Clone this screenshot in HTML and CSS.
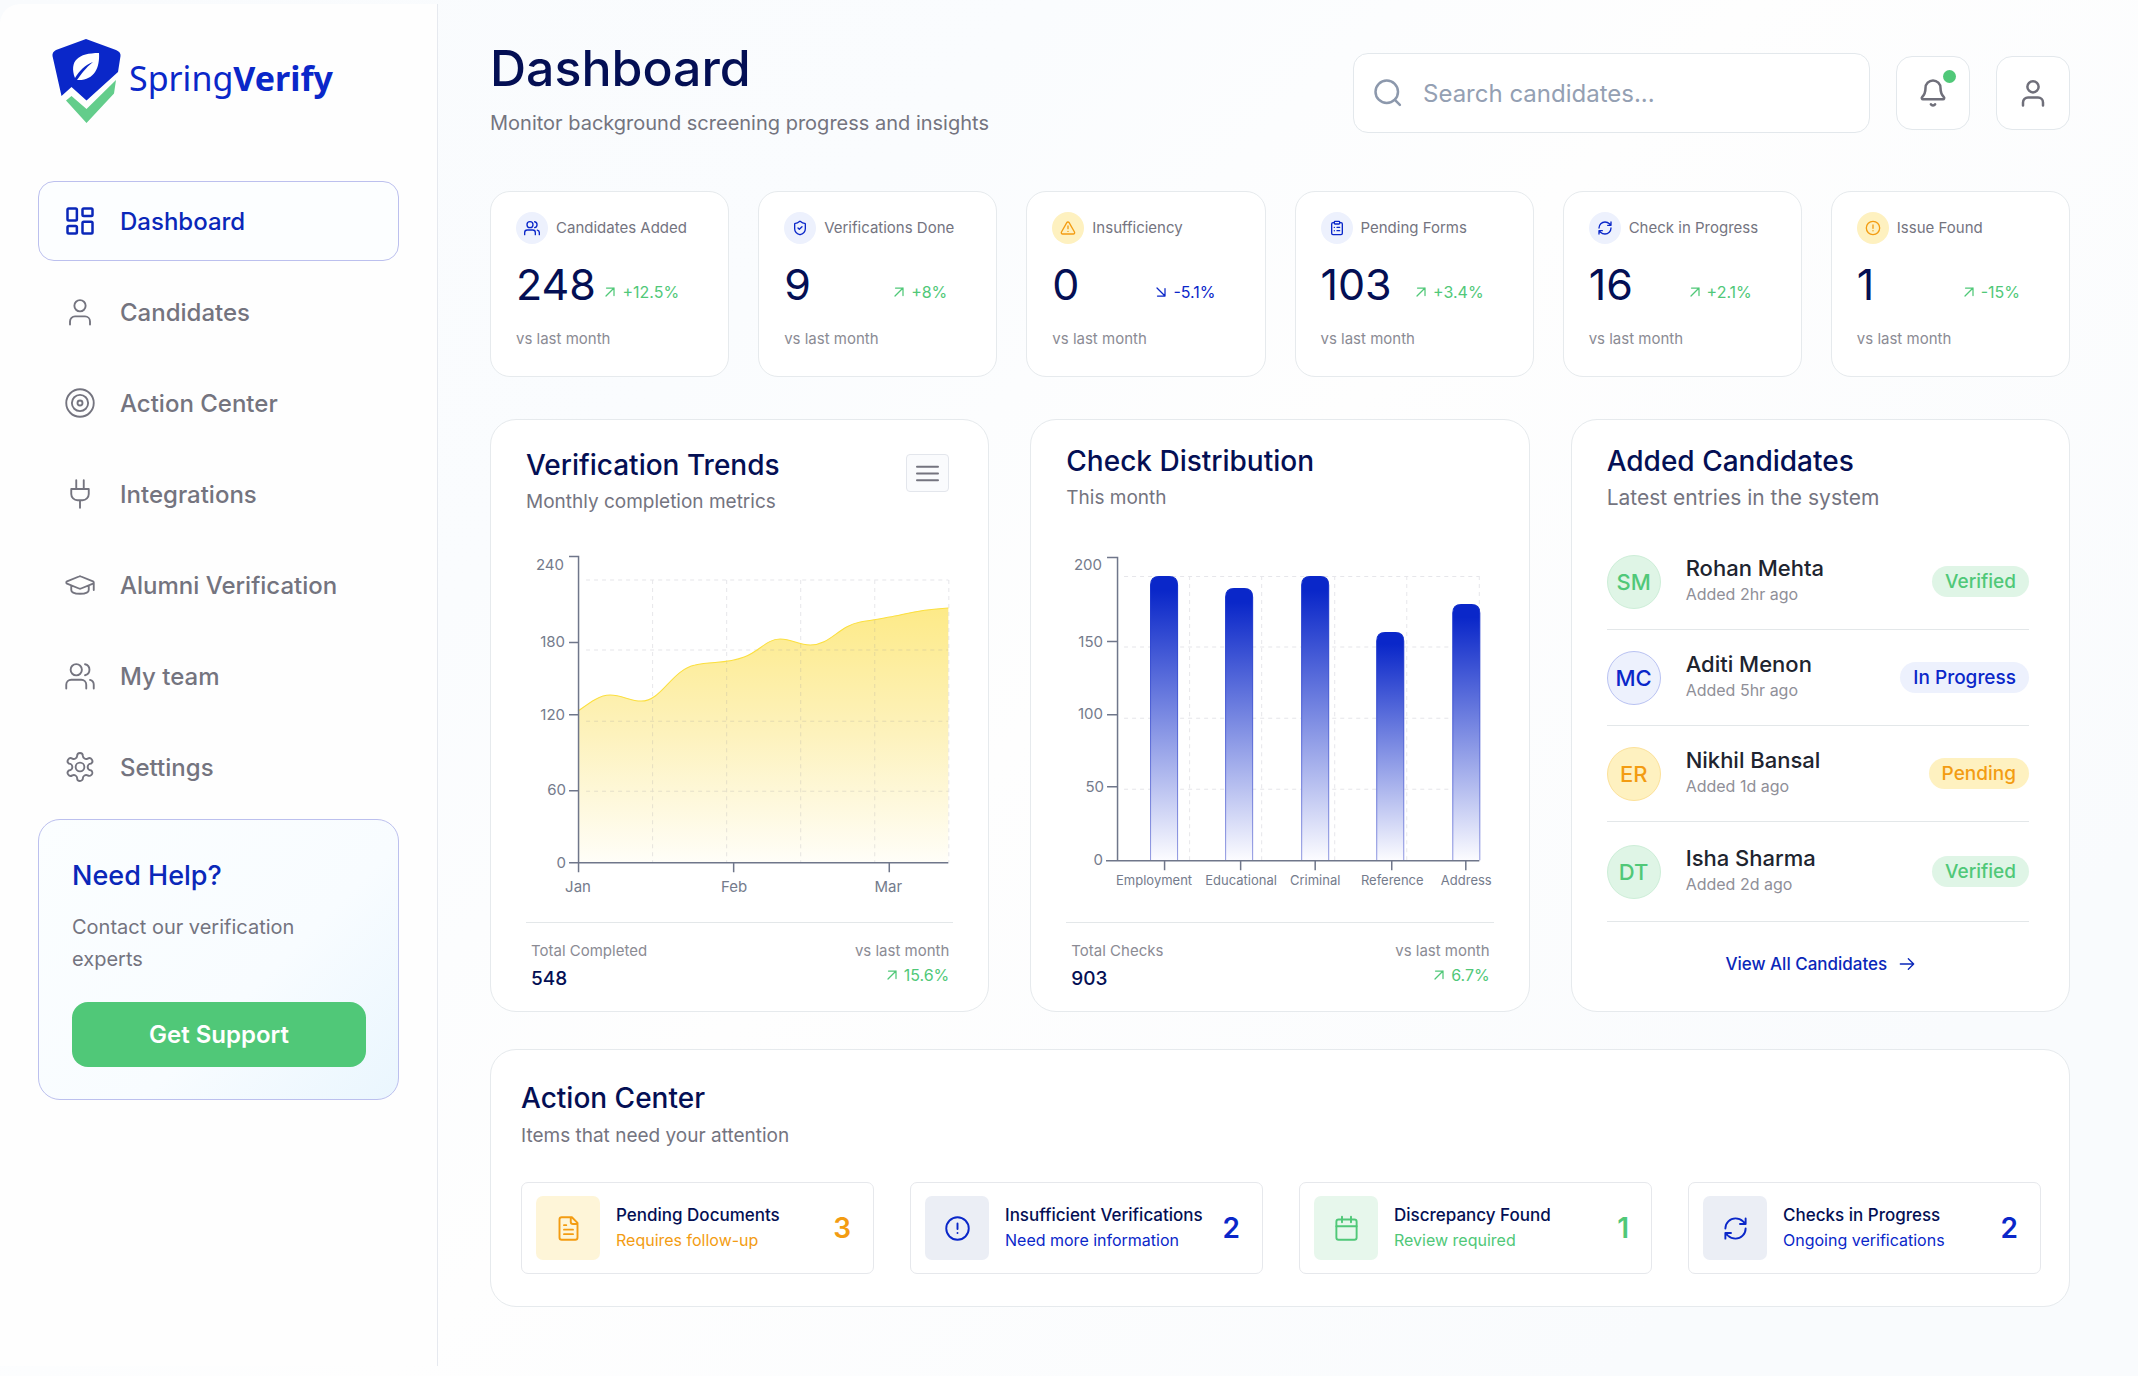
FILE: index.html
```html
<!DOCTYPE html>
<html lang="en">
<head>
    <meta charset="UTF-8">
    <meta name="viewport" content="width=device-width, initial-scale=1.0">
    <title>SpringVerify Dashboard</title>
    <link rel="stylesheet" href="styles.css">
</head>
<body>
    <!-- Shared icons -->
    <svg class="sprite" aria-hidden="true">
        <symbol id="i-grid" viewBox="0 0 24 24"><rect x="2" y="2" width="7.5" height="9.5" rx="1"/><rect x="14" y="2" width="8" height="6" rx="1"/><rect x="14" y="12.5" width="8" height="9.5" rx="1"/><rect x="2" y="16" width="7.5" height="6" rx="1"/></symbol>
        <symbol id="i-user" viewBox="0 0 24 24"><circle cx="12" cy="7" r="4.5"/><path d="M4 22v-2.5a4 4 0 0 1 4-4h8a4 4 0 0 1 4 4V22"/></symbol>
        <symbol id="i-target" viewBox="0 0 24 24"><circle cx="12" cy="12" r="11"/><circle cx="12" cy="12" r="6.5"/><circle cx="12" cy="12" r="2"/></symbol>
        <symbol id="i-plug" viewBox="0 0 24 24"><path d="M12 23v-6M9 8V1M15 8V1M19 8v4a5 5 0 0 1-5 5h-4a5 5 0 0 1-5-5V8Z"/></symbol>
        <symbol id="i-cap" viewBox="0 0 24 24"><path d="M22.4 10.9a1 1 0 0 0 0-1.8l-9.6-3.9a2 2 0 0 0-1.6 0l-9.6 3.9a1 1 0 0 0 0 1.8l9.6 3.9a2 2 0 0 0 1.6 0zM23 10v6M5 12.5V16c0 4 14 4 14 0v-3.5"/></symbol>
        <symbol id="i-users" viewBox="0 0 24 24"><circle cx="9" cy="7" r="4.5"/><path d="M1 22v-3a4 4 0 0 1 4-4h8a4 4 0 0 1 4 4v3M23 22v-3a4 4 0 0 0-3-3.9M16 2.6a4.5 4.5 0 0 1 0 8.8"/></symbol>
        <symbol id="i-gear" viewBox="0 0 24 24"><path d="M9.7 3.1a2.3 2.3 0 0 1 4.6 0 2.6 2.6 0 0 0 3.8 2.2 2.3 2.3 0 0 1 2.7 4 2.7 2.7 0 0 0 0 5.4 2.3 2.3 0 0 1-2.7 4 2.6 2.6 0 0 0-3.8 2.2 2.3 2.3 0 0 1-4.6 0 2.6 2.6 0 0 0-3.8-2.2 2.3 2.3 0 0 1-2.7-4 2.7 2.7 0 0 0 0-5.4 2.3 2.3 0 0 1 2.7-4 2.6 2.6 0 0 0 3.8-2.2"/><circle cx="12" cy="12" r="3.5"/></symbol>
        <symbol id="i-search" viewBox="0 0 24 24"><circle cx="11" cy="11" r="9"/><path d="m17.5 17.5 4 4"/></symbol>
        <symbol id="i-bell" viewBox="0 0 24 24"><path d="M10.3 21a2 2 0 0 0 3.4 0M3.3 15.3A1 1 0 0 0 4 17h16a1 1 0 0 0 .7-1.7C19.4 14 18 12.5 18 8A6 6 0 0 0 6 8c0 4.5-1.4 6-2.7 7.3"/></symbol>
        <symbol id="i-shield" viewBox="0 0 24 24"><path d="M20 13c0 5-3.5 7.5-7.7 9a1 1 0 0 1-.6 0C7.5 20.5 4 18 4 13V6a1 1 0 0 1 1-1c2 0 4.5-1.2 6.2-2.7a1.2 1.2 0 0 1 1.6 0C14.5 3.8 17 5 19 5a1 1 0 0 1 1 1zM9 12l2 2 4-4"/></symbol>
        <symbol id="i-warn" viewBox="0 0 24 24"><path d="m21.7 18-8-14a2 2 0 0 0-3.5 0l-8 14A2 2 0 0 0 4 21h16a2 2 0 0 0 1.7-3M12 9v4M12 17v.1"/></symbol>
        <symbol id="i-clipboard" viewBox="0 0 24 24"><rect x="8" y="2" width="8" height="4" rx="1"/><path d="M16 4h2a2 2 0 0 1 2 2v14a2 2 0 0 1-2 2H6a2 2 0 0 1-2-2V6a2 2 0 0 1 2-2h2M12 11h4M12 16h4M8 11v.1M8 16v.1"/></symbol>
        <symbol id="i-sync" viewBox="0 0 24 24"><path d="M3 12a9 9 0 0 1 9-9 9.8 9.8 0 0 1 6.7 2.7L21 8M21 3v5h-5M21 12a9 9 0 0 1-9 9 9.8 9.8 0 0 1-6.7-2.7L3 16M8 16H3v5"/></symbol>
        <symbol id="i-alert" viewBox="0 0 24 24"><circle cx="12" cy="12" r="10"/><path d="M12 7.5v5M12 16v.1"/></symbol>
        <symbol id="i-up" viewBox="0 0 24 24"><path d="M4 20 20 4M5 4h15v15"/></symbol>
        <symbol id="i-down" viewBox="0 0 24 24"><path d="m4 4 16 16M20 5v15H5"/></symbol>
        <symbol id="i-right" viewBox="0 0 24 24"><path d="M2 12h20M14 4l8 8-8 8"/></symbol>
        <symbol id="i-menu" viewBox="0 0 24 24"><path d="M1 5h22M1 12h22M1 19h22"/></symbol>
        <symbol id="i-file" viewBox="0 0 24 24"><path d="M15 2H6a2 2 0 0 0-2 2v16a2 2 0 0 0 2 2h12a2 2 0 0 0 2-2V7ZM14 2v4a2 2 0 0 0 2 2h4M10 9H8M16 13H8M16 17H8"/></symbol>
        <symbol id="i-calendar" viewBox="0 0 24 24"><rect x="3" y="4" width="18" height="18" rx="2"/><path d="M8 1.5v5M16 1.5v5M3 10h18"/></symbol>
    </svg>

    <div class="layout">
        <aside class="sidebar">
            <a class="logo" href="#">
                <svg class="logo-mark" viewBox="0 0 70 86" aria-hidden="true">
                    <path fill="#0a27c9" d="M35 1 L65 12 Q70 14 69.500 18 L67 34 L35.500 62.500 L20.500 49 L10.500 58 L1.500 18 Q1 14 5 12 Z"/>
                    <path fill="#fff" d="M48 15 C49 30 43 43 26 42 C34 31 37 28 42 24 C34 27 28 33 24 40 C18 23 27 15 48 15 Z"/>
                    <path fill="#63cd8b" d="M15 62.500 L20.500 58 L35.500 71 L65 42 L63 55.500 L35.500 85 Z"/>
                </svg>
                <span class="logo-text">Spring<b>Verify</b></span>
            </a>

            <nav class="nav">
                <a class="nav-item active" href="#"><svg class="icon"><use href="#i-grid"/></svg>Dashboard</a>
                <a class="nav-item" href="#"><svg class="icon"><use href="#i-user"/></svg>Candidates</a>
                <a class="nav-item" href="#"><svg class="icon"><use href="#i-target"/></svg>Action Center</a>
                <a class="nav-item" href="#"><svg class="icon"><use href="#i-plug"/></svg>Integrations</a>
                <a class="nav-item" href="#"><svg class="icon"><use href="#i-cap"/></svg>Alumni Verification</a>
                <a class="nav-item" href="#"><svg class="icon"><use href="#i-users"/></svg>My team</a>
                <a class="nav-item" href="#"><svg class="icon"><use href="#i-gear"/></svg>Settings</a>
            </nav>

            <div class="help">
                <h2>Need Help?</h2>
                <p>Contact our verification experts</p>
                <button type="button">Get Support</button>
            </div>
        </aside>

        <main class="main">
            <header class="topbar">
                <div class="heading">
                    <h1>Dashboard</h1>
                    <p>Monitor background screening progress and insights</p>
                </div>
                <div class="tools">
                    <label class="search">
                        <svg class="icon"><use href="#i-search"/></svg>
                        <input type="search" placeholder="Search candidates..." aria-label="Search candidates">
                    </label>
                    <button class="tool-btn" type="button" aria-label="Notifications">
                        <svg class="icon"><use href="#i-bell"/></svg>
                        <span class="dot"></span>
                    </button>
                    <button class="tool-btn" type="button" aria-label="Profile">
                        <svg class="icon"><use href="#i-user"/></svg>
                    </button>
                </div>
            </header>

            <section class="stats">
                <div class="card stat">
                    <div class="stat-head"><span class="bubble blue"><svg class="icon"><use href="#i-users"/></svg></span>Candidates Added</div>
                    <div class="stat-row"><span class="value">248</span><span class="trend"><svg class="icon"><use href="#i-up"/></svg>+12.5%</span></div>
                    <div class="note">vs last month</div>
                </div>
                <div class="card stat">
                    <div class="stat-head"><span class="bubble blue"><svg class="icon"><use href="#i-shield"/></svg></span>Verifications Done</div>
                    <div class="stat-row"><span class="value">9</span><span class="trend"><svg class="icon"><use href="#i-up"/></svg>+8%</span></div>
                    <div class="note">vs last month</div>
                </div>
                <div class="card stat">
                    <div class="stat-head"><span class="bubble amber"><svg class="icon"><use href="#i-warn"/></svg></span>Insufficiency</div>
                    <div class="stat-row"><span class="value">0</span><span class="trend down"><svg class="icon"><use href="#i-down"/></svg>-5.1%</span></div>
                    <div class="note">vs last month</div>
                </div>
                <div class="card stat">
                    <div class="stat-head"><span class="bubble blue"><svg class="icon"><use href="#i-clipboard"/></svg></span>Pending Forms</div>
                    <div class="stat-row"><span class="value">103</span><span class="trend"><svg class="icon"><use href="#i-up"/></svg>+3.4%</span></div>
                    <div class="note">vs last month</div>
                </div>
                <div class="card stat">
                    <div class="stat-head"><span class="bubble blue"><svg class="icon"><use href="#i-sync"/></svg></span>Check in Progress</div>
                    <div class="stat-row"><span class="value">16</span><span class="trend"><svg class="icon"><use href="#i-up"/></svg>+2.1%</span></div>
                    <div class="note">vs last month</div>
                </div>
                <div class="card stat">
                    <div class="stat-head"><span class="bubble amber"><svg class="icon"><use href="#i-alert"/></svg></span>Issue Found</div>
                    <div class="stat-row"><span class="value">1</span><span class="trend"><svg class="icon"><use href="#i-up"/></svg>-15%</span></div>
                    <div class="note">vs last month</div>
                </div>
            </section>

            <section class="panels">
                <div class="card panel trends">
                    <div class="panel-head">
                        <div>
                            <h2>Verification Trends</h2>
                            <p>Monthly completion metrics</p>
                        </div>
                        <button class="menu-btn" type="button" aria-label="Chart menu"><svg class="icon"><use href="#i-menu"/></svg></button>
                    </div>
                    <svg class="chart" viewBox="0 0 427 356" role="img" aria-label="Verification trends">
                        <defs>
                            <linearGradient id="areaFill" x1="0" y1="0" x2="0" y2="1">
                                <stop offset="0" stop-color="#fdea88"/>
                                <stop offset="0.5" stop-color="#fdf2bd"/>
                                <stop offset="1" stop-color="#fffef8"/>
                            </linearGradient>
                        </defs>
                        <path fill="url(#areaFill)" d="M52 165C63 157 73 149 84 149C96 149 104 155 115 155C136 155 145 124 169 119C186 115 200 118 218 111C234 105 240 93 254 93C266 93 272 99 284 99C304 99 312 80 334 76C344 74 354 73 363 71C377 69 387 64 422 62V316H52Z"/>
                        <path class="gridline" d="M60 34H422M60 104H422M60 175H422M60 245H422M126.5 34V316M200.5 34V316M274.5 34V316M348.5 34V316M422.5 34V316"/>
                        <path fill="none" stroke="#fbdf3f" d="M52 165C63 157 73 149 84 149C96 149 104 155 115 155C136 155 145 124 169 119C186 115 200 118 218 111C234 105 240 93 254 93C266 93 272 99 284 99C304 99 312 80 334 76C344 74 354 73 363 71C377 69 387 64 422 62"/>
                        <path class="axis" d="M43 10.5H52.5V326M43 96.5H52M43 168.5H52M43 244.5H52M43 316.5H422M207.5 317V326M363 317V326"/>
                        <g class="tick-y">
                            <text x="38" y="24">240</text>
                            <text x="39" y="101">180</text>
                            <text x="39" y="174">120</text>
                            <text x="40" y="249">60</text>
                            <text x="40" y="322">0</text>
                        </g>
                        <g class="tick-x months">
                            <text x="52" y="346">Jan</text>
                            <text x="208" y="346">Feb</text>
                            <text x="362" y="346">Mar</text>
                        </g>
                    </svg>
                    <div class="panel-foot">
                        <div>
                            <span class="foot-label">Total Completed</span>
                            <strong>548</strong>
                        </div>
                        <div class="foot-right">
                            <span class="foot-label">vs last month</span>
                            <span class="trend"><svg class="icon"><use href="#i-up"/></svg>15.6%</span>
                        </div>
                    </div>
                </div>

                <div class="card panel">
                    <div class="panel-head">
                        <div>
                            <h2>Check Distribution</h2>
                            <p>This month</p>
                        </div>
                    </div>
                    <svg class="chart" viewBox="0 0 427 356" role="img" aria-label="Check distribution">
                        <defs>
                            <linearGradient id="barFill" x1="0" y1="0" x2="0" y2="1">
                                <stop offset="0.05" stop-color="#0a27c9"/>
                                <stop offset="1" stop-color="#fcfcff"/>
                            </linearGradient>
                            <linearGradient id="barLine" x1="0" y1="0" x2="0" y2="1">
                                <stop offset="0" stop-color="#0a27c9"/>
                                <stop offset="1" stop-color="#8f97e0"/>
                            </linearGradient>
                        </defs>
                        <path class="gridline" d="M58 30.5H413M58 101H413M58 172H413M58 243H413M123.5 30V314M195.5 30V314M268.5 30V314M340.5 30V314M413 30V314"/>
                        <g fill="url(#barFill)" stroke="url(#barLine)">
                            <path d="M84.5 314V39Q84.5 30.5 93 30.5H103Q111.5 30.5 111.5 39V314"/>
                            <path d="M159.5 314V51Q159.5 42.5 168 42.5H178Q186.5 42.5 186.5 51V314"/>
                            <path d="M235.5 314V39Q235.5 30.5 244 30.5H254Q262.5 30.5 262.5 39V314"/>
                            <path d="M310.5 314V95Q310.5 86.5 319 86.5H329Q337.5 86.5 337.5 95V314"/>
                            <path d="M386.5 314V67Q386.5 58.5 395 58.5H405Q413.5 58.5 413.5 67V314"/>
                        </g>
                        <path class="axis" d="M41 11.5H51.5V314M41 95.5H51M41 168.5H51M41 240.5H51M40 314.5H413M98.5 315V324M174.5 315V324M249 315V324M325.5 315V324M399.5 315V324"/>
                        <g class="tick-y">
                            <text x="36" y="24">200</text>
                            <text x="37" y="101">150</text>
                            <text x="37" y="173">100</text>
                            <text x="38" y="246">50</text>
                            <text x="37" y="319">0</text>
                        </g>
                        <g class="tick-x">
                            <text x="88" y="339">Employment</text>
                            <text x="175" y="339">Educational</text>
                            <text x="249" y="339">Criminal</text>
                            <text x="326" y="339">Reference</text>
                            <text x="400" y="339">Address</text>
                        </g>
                    </svg>
                    <div class="panel-foot">
                        <div>
                            <span class="foot-label">Total Checks</span>
                            <strong>903</strong>
                        </div>
                        <div class="foot-right">
                            <span class="foot-label">vs last month</span>
                            <span class="trend"><svg class="icon"><use href="#i-up"/></svg>6.7%</span>
                        </div>
                    </div>
                </div>

                <div class="card panel">
                    <div class="panel-head">
                        <div>
                            <h2>Added Candidates</h2>
                            <p class="wide">Latest entries in the system</p>
                        </div>
                    </div>
                    <ul class="people">
                        <li>
                            <span class="avatar green">SM</span>
                            <div class="person"><span class="name">Rohan Mehta</span><span class="added">Added 2hr ago</span></div>
                            <span class="badge green">Verified</span>
                        </li>
                        <li>
                            <span class="avatar blue">MC</span>
                            <div class="person"><span class="name">Aditi Menon</span><span class="added">Added 5hr ago</span></div>
                            <span class="badge blue">In Progress</span>
                        </li>
                        <li>
                            <span class="avatar amber">ER</span>
                            <div class="person"><span class="name">Nikhil Bansal</span><span class="added">Added 1d ago</span></div>
                            <span class="badge amber">Pending</span>
                        </li>
                        <li>
                            <span class="avatar green">DT</span>
                            <div class="person"><span class="name">Isha Sharma</span><span class="added">Added 2d ago</span></div>
                            <span class="badge green">Verified</span>
                        </li>
                    </ul>
                    <a class="view-all" href="#">View All Candidates<svg class="icon"><use href="#i-right"/></svg></a>
                </div>
            </section>

            <section class="card actions">
                <h2>Action Center</h2>
                <p>Items that need your attention</p>
                <div class="action-list">
                    <a class="action amber" href="#">
                        <span class="tile"><svg class="icon"><use href="#i-file"/></svg></span>
                        <span class="action-text"><b>Pending Documents</b><span>Requires follow-up</span></span>
                        <span class="count">3</span>
                    </a>
                    <a class="action blue" href="#">
                        <span class="tile"><svg class="icon"><use href="#i-alert"/></svg></span>
                        <span class="action-text"><b>Insufficient Verifications</b><span>Need more information</span></span>
                        <span class="count">2</span>
                    </a>
                    <a class="action green" href="#">
                        <span class="tile"><svg class="icon"><use href="#i-calendar"/></svg></span>
                        <span class="action-text"><b>Discrepancy Found</b><span>Review required</span></span>
                        <span class="count">1</span>
                    </a>
                    <a class="action blue" href="#">
                        <span class="tile"><svg class="icon"><use href="#i-sync"/></svg></span>
                        <span class="action-text"><b>Checks in Progress</b><span>Ongoing verifications</span></span>
                        <span class="count">2</span>
                    </a>
                </div>
            </section>
        </main>
    </div>
</body>
</html>
```
FILE: styles.css
```css
* {
    box-sizing: border-box;
}
body {
    margin: 0;
    font-family: Inter, "Liberation Sans", sans-serif;
    color: #74747f;
    background: linear-gradient(135deg, #f9fbfd 0%, #fafcfe 30%, #fefefe 50%, #f9fbfd 85%);
}
h1, h2, p, ul {
    margin: 0;
    padding: 0;
}
h1, h2 {
    color: #040f54;
    font-weight: 500;
}
a {
    color: inherit;
    text-decoration: none;
}
button {
    font-family: inherit;
    cursor: pointer;
}
.sprite {
    display: none;
}
.icon {
    flex: none;
    width: 30px;
    height: 30px;
    fill: none;
    stroke: currentColor;
    stroke-width: 1.5;
    stroke-linecap: round;
    stroke-linejoin: round;
}
.layout {
    display: flex;
    min-height: 100vh;
}
.card {
    background: #fff;
    border: 1px solid #e6eaed;
    border-radius: 26px;
}

/* Sidebar */
.sidebar {
    flex: none;
    width: 438px;
    margin: 4px 0 10px;
    padding: 34px 38px 0;
    background: #fefefe;
    border-right: 1px solid #e6e9ef;
    border-top-left-radius: 20px;
}
.logo {
    display: flex;
    align-items: center;
    gap: 8px;
    padding-left: 13px;
    color: #0a27c9;
}
.logo-mark {
    width: 70px;
    height: 86px;
}
.logo-text {
    font-family: "Noto Sans", sans-serif;
    font-size: 34px;
    line-height: 46px;
    padding-bottom: 6px;
}
.logo-text b {
    font-weight: 700;
}
.nav {
    display: flex;
    flex-direction: column;
    gap: 11px;
    margin-top: 57px;
}
.nav-item {
    display: flex;
    align-items: center;
    gap: 25px;
    height: 80px;
    padding-left: 26px;
    border: 1px solid transparent;
    border-radius: 16px;
    font-size: 24px;
    font-weight: 500;
}
.nav-item.active {
    color: #0a27b9;
    background: #fcfeff;
    border-color: #bcc0ee;
}
.nav-item.active .icon {
    stroke-width: 2;
}
.help {
    margin-top: 12px;
    padding: 36px 32px 32px 33px;
    border: 1px solid #bcc0ee;
    border-radius: 22px;
    background: linear-gradient(135deg, #fbfeff, #f8fcff 60%, #eaf6fe);
}
.help h2 {
    color: #0a27b9;
    font-size: 27px;
    line-height: 40px;
}
.help p {
    margin-top: 15px;
    font-size: 20px;
    line-height: 32px;
}
.help button {
    width: 100%;
    height: 65px;
    margin-top: 27px;
    border: 0;
    border-radius: 16px;
    background: #50c878;
    color: #fff;
    font-size: 24px;
    font-weight: 600;
}

/* Header */
.main {
    flex: 1;
    min-width: 0;
    padding: 32px 68px 32px 52px;
}
.topbar {
    display: flex;
    justify-content: space-between;
    height: 159px;
}
.heading h1 {
    font-size: 50px;
    line-height: 72px;
}
.heading p {
    font-size: 20px;
    line-height: 38px;
}
.tools {
    display: flex;
    align-items: center;
    gap: 26px;
    height: 122px;
}
.search {
    display: flex;
    align-items: center;
    gap: 20px;
    width: 517px;
    height: 80px;
    padding: 0 19px;
    background: #fff;
    border: 1px solid #e3e8ec;
    border-radius: 15px;
    color: #8c98ac;
}
.search .icon {
    stroke-width: 2;
}
.search input {
    flex: 1;
    min-width: 0;
    padding: 0;
    border: 0;
    outline: 0;
    background: none;
    font-family: inherit;
    font-size: 24px;
    color: #040f54;
}
.search input::placeholder {
    color: #94a0b3;
    opacity: 1;
}
.tool-btn {
    position: relative;
    display: flex;
    align-items: center;
    justify-content: center;
    width: 74px;
    height: 74px;
    background: #fff;
    border: 1px solid #e3e8ec;
    border-radius: 16px;
    color: #6f6f7a;
}
.tool-btn .icon {
    stroke-width: 2;
}
.dot {
    position: absolute;
    top: 13px;
    right: 13px;
    width: 13px;
    height: 13px;
    border-radius: 50%;
    background: #50c878;
}

/* Stat cards */
.stats {
    display: grid;
    grid-template-columns: repeat(6, 1fr);
    gap: 29px;
}
.stat {
    padding: 20px 12px 25px 25px;
    border-radius: 20px;
}
.stat-head {
    display: flex;
    align-items: center;
    gap: 8px;
    font-size: 15px;
    line-height: 32px;
    white-space: nowrap;
}
.bubble {
    display: flex;
    align-items: center;
    justify-content: center;
    width: 32px;
    height: 32px;
    border-radius: 50%;
}
.bubble .icon {
    width: 16px;
    height: 16px;
    stroke-width: 2;
}
.blue {
    color: #0a27c9;
    background: #edf1fd;
}
.amber {
    color: #f39c12;
    background: #fef1c0;
}
.green {
    color: #50c878;
    background: #dff5e6;
}
.stat-row {
    display: flex;
    align-items: flex-end;
    justify-content: space-between;
    margin-top: 13px;
    padding-right: 37px;
}
.value {
    color: #040f54;
    font-size: 43px;
    line-height: 54px;
}
.trend {
    display: flex;
    align-items: center;
    gap: 6px;
    color: #50c878;
    font-size: 16px;
    line-height: 24px;
}
.trend .icon {
    width: 12px;
    height: 12px;
    stroke-width: 2.5;
}
.trend.down {
    color: #0a27c9;
}
.stat-row .trend {
    padding-bottom: 7px;
}
.note {
    margin-top: 16px;
    color: #8b8b94;
    font-size: 15px;
    line-height: 24px;
}

/* Panels */
.panels {
    display: grid;
    grid-template-columns: repeat(3, 1fr);
    gap: 41px;
    margin-top: 42px;
}
.panel {
    display: flex;
    flex-direction: column;
    padding: 20px 35px 16px;
}
.panel-head {
    display: flex;
    align-items: flex-start;
    justify-content: space-between;
    height: 94px;
}
.trends .panel-head {
    padding-top: 4px;
}
.panel h2, .actions h2 {
    font-size: 28px;
    line-height: 42px;
}
.panel-head p {
    font-size: 19px;
    line-height: 32px;
}
.panel-head p.wide {
    font-size: 21px;
}
.menu-btn {
    display: flex;
    align-items: center;
    justify-content: center;
    width: 43px;
    height: 38px;
    margin: 10px 4px 0 0;
    padding: 0;
    background: #fafbfd;
    border: 1px solid #e3e6ec;
    border-radius: 4px;
    color: #74747f;
}
.menu-btn .icon {
    width: 23px;
    height: 23px;
    stroke-width: 2;
}
.chart {
    display: block;
    width: 100%;
    margin-top: 12px;
    overflow: visible;
}
.gridline {
    fill: none;
    stroke: #8c8ca0;
    stroke-opacity: 0.22;
    stroke-dasharray: 4 4;
}
.axis {
    fill: none;
    stroke: #6f768a;
    stroke-width: 1.5;
}
.tick-y {
    fill: #747b8c;
    font-size: 15px;
    text-anchor: end;
}
.tick-x {
    fill: #747b8c;
    font-size: 13px;
    text-anchor: middle;
}
.tick-x.months {
    font-size: 15px;
}
.panel-foot {
    display: flex;
    justify-content: space-between;
    margin-top: 20px;
    padding: 15px 4px 0 5px;
    border-top: 1px solid #e3e7e9;
}
.panel-foot > div {
    display: flex;
    flex-direction: column;
}
.foot-label {
    color: #8b8b94;
    font-size: 15px;
    line-height: 25px;
}
.panel-foot strong {
    color: #040f54;
    font-size: 19px;
    font-weight: 500;
    line-height: 32px;
}
.foot-right {
    align-items: flex-end;
}

/* Candidates list */
.people {
    list-style: none;
    padding-right: 5px;
}
.people li {
    display: flex;
    align-items: center;
    gap: 25px;
    height: 96px;
    border-bottom: 1px solid #e3e7e9;
}
.people li:last-child {
    height: 100px;
}
.avatar {
    display: flex;
    align-items: center;
    justify-content: center;
    width: 54px;
    height: 54px;
    border: 1px solid #cdeed8;
    border-radius: 50%;
    font-size: 22px;
    font-weight: 500;
}
.avatar.blue {
    border-color: #b9c2f2;
}
.avatar.amber {
    border-color: #fce19a;
}
.person {
    display: flex;
    flex: 1;
    flex-direction: column;
    padding-bottom: 4px;
}
.name {
    color: #20242f;
    font-size: 22px;
    font-weight: 500;
    line-height: 28px;
}
.added {
    color: #8f8f98;
    font-size: 16px;
    line-height: 24px;
}
.badge {
    padding: 0 13px;
    border-radius: 16px;
    font-size: 19px;
    font-weight: 500;
    line-height: 31px;
}
.view-all {
    display: flex;
    align-items: center;
    justify-content: center;
    gap: 12px;
    margin-top: 30px;
    color: #0a27b9;
    font-size: 17px;
    font-weight: 500;
    line-height: 24px;
}
.view-all .icon {
    width: 16px;
    height: 16px;
    stroke-width: 2;
}

/* Action center */
.actions {
    margin-top: 37px;
    padding: 27px 28px 32px 30px;
}
.actions > p {
    font-size: 19px;
    line-height: 34px;
}
.action-list {
    display: grid;
    grid-template-columns: repeat(4, 1fr);
    gap: 36px;
    margin-top: 29px;
}
.action {
    display: flex;
    align-items: center;
    gap: 16px;
    height: 92px;
    padding: 0 22px 0 14px;
    background: #fff;
    border: 1px solid #e6e8ec;
    border-radius: 7px;
}
.tile {
    display: flex;
    align-items: center;
    justify-content: center;
    width: 64px;
    height: 64px;
    border-radius: 7px;
    background: #ebeef5;
}
.amber .tile {
    background: #fef5d8;
}
.green .tile {
    background: #e7f7ec;
}
.tile .icon {
    width: 27px;
    height: 27px;
    stroke-width: 1.7;
}
.action-text {
    display: flex;
    flex: 1;
    flex-direction: column;
    font-size: 16px;
    line-height: 25px;
    white-space: nowrap;
}
.action-text b {
    color: #040f54;
    font-size: 17px;
    font-weight: 500;
}
.count {
    font-size: 28px;
    font-weight: 600;
}
```
